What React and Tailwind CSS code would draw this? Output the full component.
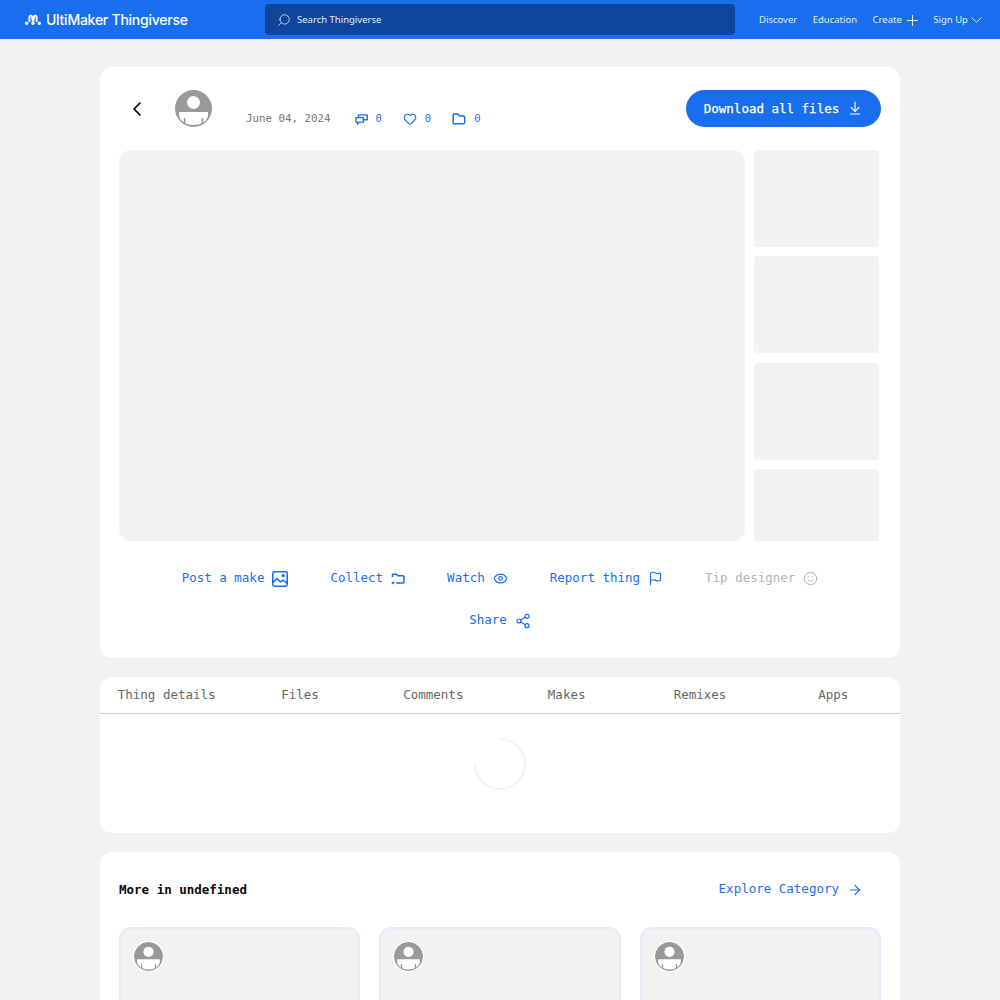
import { ArrowDownToLine, ArrowRight, ChevronLeft, Eye, Flag, Heart, Search, Share2, Smile } from 'lucide-react';

const mono = "font-['DejaVu_Sans_Mono',monospace]";

function Avatar({ className }) {
    return (
        <svg viewBox="0 0 37 37" className={className}>
            <circle cx="18.5" cy="18.5" r="18.5" fill="#999" />
            <circle cx="18.5" cy="12.5" r="6.5" fill="#fff" />
            <path d="M4 22 H33 V25 A14.5 10 0 0 1 4 25 Z" fill="#fff" />
            <path d="M8.8 34 V28 h1.6 v6 Z M26.6 34 V28 h1.6 v6 Z" fill="#999" />
        </svg>
    );
}

function Logo() {
    return (
        <svg viewBox="0 0 16 11" className="w-4 h-[11px]" fill="none" stroke="#fff" strokeWidth="1.9">
            <path d="M4.4 8 V2.8 a1.3 1.3 0 0 1 2.5 -0.4 L8 8 M11.6 8 V2.8 a1.3 1.3 0 0 0 -2.5 -0.4 L8 8" />
            <circle cx="1.7" cy="9.2" r="1.7" fill="#fff" stroke="none" />
            <circle cx="8" cy="9.2" r="1.7" fill="#fff" stroke="none" />
            <circle cx="14.3" cy="9.2" r="1.7" fill="#fff" stroke="none" />
        </svg>
    );
}

function CommentsIcon() {
    return (
        <svg viewBox="0 0 14 14" className="w-[13px] h-[13px]" fill="none" stroke="currentColor" strokeWidth="1.5" strokeLinejoin="round">
            <path d="M1 5 h8 v4.8 H4.8 L2.8 12 v-2.2 H1 Z" />
            <path d="M3.8 5 V2 h9.4 v5.2 h-4" />
        </svg>
    );
}

function FolderIcon() {
    return (
        <svg viewBox="0 0 14 14" className="w-[14px] h-[14px]" fill="none" stroke="currentColor" strokeWidth="1.5" strokeLinejoin="round">
            <path d="M1.2 3 a1 1 0 0 1 1-1 h3.6 l1.6 1.9 h3.9 a1.4 1.4 0 0 1 1.4 1.4 v5 a1.4 1.4 0 0 1 -1.4 1.4 H2.2 a1 1 0 0 1 -1-1 Z" />
        </svg>
    );
}

function ImageIcon() {
    return (
        <svg viewBox="0 0 16 16" className="w-4 h-4" fill="none" stroke="currentColor" strokeWidth="1.6" strokeLinejoin="round">
            <rect x="0.8" y="0.8" width="14.4" height="14.4" rx="1.6" />
            <path d="M1 11.5 L5 7.5 L8.5 11 L11 9 L15 12.5" />
            <circle cx="11.2" cy="4.6" r="0.9" />
        </svg>
    );
}

function CollectIcon() {
    return (
        <svg viewBox="0 0 14 14" className="w-3.5 h-3.5" fill="none" stroke="currentColor" strokeWidth="1.6" strokeLinejoin="round">
            <path d="M1.5 5 V2.2 h4 l1.2 1.6 h4.9 a1.4 1.4 0 0 1 1.4 1.4 v4.4 a1.4 1.4 0 0 1 -1.4 1.4 H5.2" />
            <path d="M0.6 10.8 h2.8 M2 9.4 v2.8" strokeWidth="1.2" />
        </svg>
    );
}

function Action({ label, muted, children }) {
    return (
        <div className={`flex items-center gap-2 text-[12.5px] pt-px ${muted ? 'text-[#b3b3b3]' : 'text-[#196ef0]'}`}>
            <span>{label}</span>
            {children}
        </div>
    );
}

function Stat({ children }) {
    return (
        <div className="flex items-center gap-[8px] text-[#196ef0] text-[10.5px]">
            {children}
            <span>0</span>
        </div>
    );
}

function MoreCard() {
    return (
        <div className="h-[200px] bg-[#f2f2f2] border-2 border-[#e3ecf8] rounded-xl p-[13px]">
            <Avatar className="w-[29px] h-[29px] rounded-full ring-1 ring-white" />
        </div>
    );
}

export default function App() {
    const tabs = ['Thing details', 'Files', 'Comments', 'Makes', 'Remixes', 'Apps'];

    return (
        <div className={`h-[1000px] overflow-hidden bg-[#f2f2f2] antialiased ${mono}`}>
            <header className="h-[39px] bg-[#196ef0] flex items-center text-white font-['Noto_Sans',sans-serif]">
                <div className="w-[265px] pl-[25px] flex items-center gap-[5px] shrink-0">
                    <Logo />
                    <span className="font-['Inter',sans-serif] text-[14px] font-medium tracking-[-0.25px]">UltiMaker Thingiverse</span>
                </div>
                <div className="w-[470px] h-[31px] bg-[#0f469b] rounded-sm flex items-center pl-[12px] gap-[6px] shrink-0">
                    <Search className="w-[14px] h-[14px] -scale-x-100" strokeWidth={1.2} />
                    <span className="text-[9.5px] text-[#e4ecf8] pt-px">Search Thingiverse</span>
                </div>
                <nav className="flex-1 flex items-center pl-[24px] gap-[15.5px] text-[9.5px] text-[#e4ecf8] whitespace-nowrap">
                    <span className="pt-px">Discover</span>
                    <span className="pt-px">Education</span>
                    <span className="flex items-center gap-[5px] mt-px">
                        Create
                        <svg viewBox="0 0 11 11" className="w-[11px] h-[11px]" fill="none" stroke="currentColor" strokeWidth="1">
                            <path d="M5.5 0 V11 M0 5.5 H11" />
                        </svg>
                    </span>
                    <span className="flex items-center gap-[3px] mt-px">
                        Sign Up
                        <svg viewBox="0 0 11 6" className="w-[11px] h-[6px]" fill="none" stroke="currentColor" strokeWidth="0.9">
                            <path d="M0.5 0.5 L5.5 5.2 L10.5 0.5" />
                        </svg>
                    </span>
                </nav>
            </header>

            <main className="w-[800px] mx-auto pt-[28px] flex flex-col gap-[19px]">
                <section className="h-[591px] bg-white rounded-xl px-[19px] pt-[23px]">
                    <div className="h-[37px] flex items-center">
                        <ChevronLeft className="w-6 h-6 ml-[7px] -translate-x-px text-black" strokeWidth={1.7} />
                        <Avatar className="w-[37px] h-[37px] ml-[25px]" />
                        <div className="flex items-center h-[37px] pt-[21px] ml-[34px] gap-[21px] text-[10.8px] text-[#757575]">
                            <span className="mr-[3px]">June 04, 2024</span>
                            <Stat><CommentsIcon /></Stat>
                            <Stat><Heart className="w-[14px] h-[14px]" strokeWidth={1.9} /></Stat>
                            <Stat><FolderIcon /></Stat>
                        </div>
                        <button className="ml-auto w-[195px] h-[37px] bg-[#196ef0] rounded-full text-white text-[12.5px] [-webkit-text-stroke:0.25px_white] flex items-center justify-center gap-2">
                            <span className="pt-px">Download all files</span>
                            <ArrowDownToLine className="w-[16px] h-[16px] -translate-y-px" strokeWidth={1.8} />
                        </button>
                    </div>

                    <div className="mt-[23px] h-[391px] flex gap-[9px] overflow-hidden">
                        <div className="w-[626px] bg-[#f2f2f2] rounded-xl" />
                        <div className="w-[125px] flex flex-col gap-[9.3px]">
                            {[0, 1, 2, 3].map((i) => (
                                <div key={i} className="h-[97px] shrink-0 bg-[#f2f2f2] rounded" />
                            ))}
                        </div>
                    </div>

                    <div className="mt-[26px] flex justify-center gap-[42px] h-[22px]">
                        <Action label="Post a make"><ImageIcon /></Action>
                        <Action label="Collect"><CollectIcon /></Action>
                        <Action label="Watch"><Eye className="w-[15px] h-[15px]" strokeWidth={1.9} /></Action>
                        <Action label="Report thing"><Flag className="w-[15px] h-[15px]" strokeWidth={1.8} /></Action>
                        <Action label="Tip designer" muted><Smile className="w-[15px] h-[15px]" strokeWidth={1.6} /></Action>
                    </div>
                    <div className="mt-[20px] flex justify-center h-[22px]">
                        <Action label="Share"><Share2 className="w-4 h-4" strokeWidth={1.8} /></Action>
                    </div>
                </section>

                <section className="h-[156px] bg-white rounded-xl">
                    <div className="h-[37px] grid grid-cols-6 border-b border-[#c9ccd0] text-[12.5px] text-[#666]">
                        {tabs.map((tab) => (
                            <div key={tab} className="flex items-center justify-center">{tab}</div>
                        ))}
                    </div>
                    <div className="flex justify-center pt-[24px]">
                        <div className="w-[52px] h-[52px] rounded-full border-2 border-[#f2f2f2] border-t-transparent -rotate-45" />
                    </div>
                </section>

                <section className="bg-white rounded-xl px-[19px] pt-[29px]">
                    <div className="h-[19px] flex items-center justify-between">
                        <span className="text-[12.5px] font-bold text-[#0a0a0a]">More in undefined</span>
                        <span className="flex items-center gap-2 text-[12.5px] text-[#196ef0] mr-[18px] pb-[2px]">
                            Explore Category
                            <ArrowRight className="w-[16px] h-[16px]" strokeWidth={1.8} />
                        </span>
                    </div>
                    <div className="mt-[27px] grid grid-cols-3 gap-[19px] pb-6">
                        <MoreCard />
                        <MoreCard />
                        <MoreCard />
                    </div>
                </section>
            </main>
        </div>
    );
}
